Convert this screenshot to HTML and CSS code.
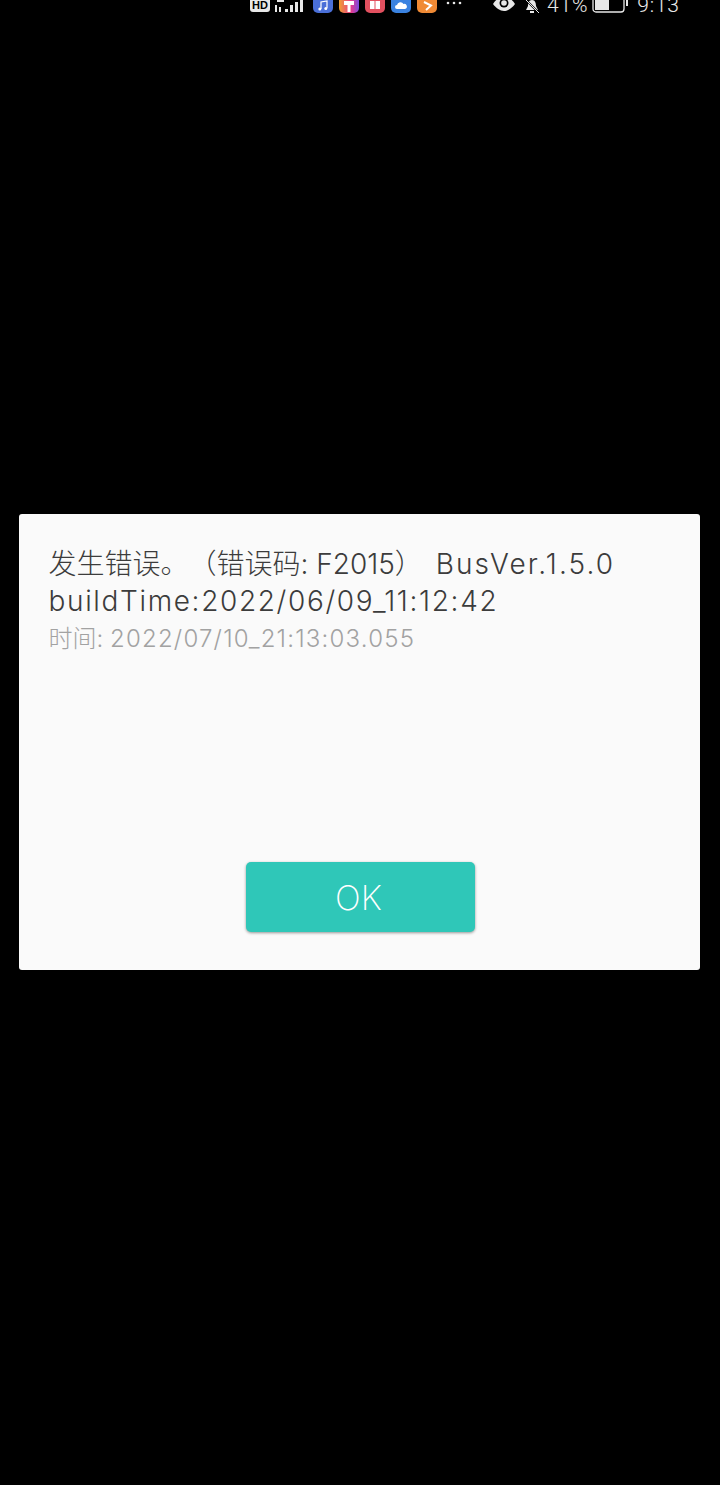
FILE: index.html
```
<!DOCTYPE html>
<html lang="zh">
<head>
<meta charset="utf-8">
<title>Error</title>
<link rel="stylesheet" href="styles.css">
</head>
<body>
<div class="status">
  <span class="hd">HD</span>
  <svg class="signal" width="32" height="13" viewBox="0 0 32 13"><g fill="#e8e8e8"><rect x="3" y="0" width="7" height="2"/><rect x="1" y="5" width="2" height="7"/><rect x="5" y="7" width="2" height="5"/><rect x="11" y="9" width="3" height="3"/><rect x="16" y="5" width="3" height="7"/><rect x="21" y="2" width="3" height="10"/><rect x="26" y="0" width="3" height="12"/></g></svg>
  <span class="app app-music"><svg width="14" height="13" viewBox="0 0 14 13"><path d="M5 9V2l6-1v7" fill="none" stroke="#fff" stroke-width="1.200"/><circle cx="3.800" cy="9" r="1.500" fill="#fff"/><circle cx="9.800" cy="8.500" r="1.500" fill="#fff"/></svg></span>
  <span class="app app-brush"><svg width="14" height="13" viewBox="0 0 14 13"><path d="M2 1h10v4H8.500v7h-3V5H2z" fill="#fff"/></svg></span>
  <span class="app app-book"><svg width="14" height="13" viewBox="0 0 14 13"><path d="M2 1h4.500v8H2zM7.500 1H12v8H7.500z" fill="#fff"/></svg></span>
  <span class="app app-cloud"><svg width="14" height="13" viewBox="0 0 14 13"><path d="M3 9a2 2 0 0 1 0-4 3.500 3.500 0 0 1 6.500-1A2.500 2.500 0 0 1 11 9z" fill="#fff"/></svg></span>
  <span class="app app-play"><svg width="14" height="13" viewBox="0 0 14 13"><path d="M4 2l7 3.500L6 10" fill="none" stroke="#fff" stroke-width="2"/></svg></span>
  <svg class="dots" width="16" height="6" viewBox="0 0 16 6"><circle cx="2" cy="3" r="1.300" fill="#e8e8e8"/><circle cx="8" cy="3" r="1.300" fill="#e8e8e8"/><circle cx="14" cy="3" r="1.300" fill="#e8e8e8"/></svg>
  <svg class="eye" width="24" height="13" viewBox="0 0 24 13"><path d="M1 4C4-1 8-3 12-3s8 2 11 7c-3 4-7 7-11 7S4 8 1 4z" fill="#e8e8e8"/><circle cx="12" cy="3" r="4.500" fill="#000"/><circle cx="12" cy="3" r="2.800" fill="#e8e8e8"/></svg>
  <svg class="bell" width="18" height="14" viewBox="0 0 18 14"><path d="M9 0c3 0 4 3 4 6l2 4H3l2-4c0-3 1-6 4-6z" fill="#e8e8e8"/><rect x="7" y="11" width="4" height="2" fill="#e8e8e8"/><path d="M3 0l13 13" stroke="#000" stroke-width="1.800"/><path d="M3 0l13 13" stroke="#e8e8e8" stroke-width="1"/></svg>
  <span class="pct">41%</span>
  <svg class="battery" width="36" height="13" viewBox="0 0 36 13"><rect x="1" y="-4" width="31" height="16" rx="3" fill="none" stroke="#e8e8e8" stroke-width="1.300"/><rect x="3" y="-2" width="14" height="12" fill="#e8e8e8"/><rect x="34" y="0" width="2" height="6" fill="#e8e8e8"/></svg>
  <span class="clock">9:13</span>
</div>
<main class="stage">
  <section class="dialog">
    <div class="msg">
      <p class="error">发生错误。（错误码: F2015） <span class="ver">BusVer.1.5.0</span><br><span class="build">buildTime:2022/06/09_11:12:42</span></p>
      <p class="time">时间: <span class="stamp">2022/07/10_21:13:03.055</span></p>
    </div>
    <button class="ok" type="button"><span class="ok-label">OK</span></button>
  </section>
</main>
</body>
</html>
```
FILE: styles.css
```
html, body { margin: 0; padding: 0; background: #000; }
body { width: 720px; height: 1485px; overflow: hidden; font-family: "Noto Sans CJK SC", "Noto Sans", sans-serif; }
.status { height: 14px; display: flex; align-items: flex-start; overflow: hidden; padding-left: 250px; color: #e8e8e8; }
.hd { width: 20px; height: 12px; border-radius: 0 0 3px 3px; background: #e8e8e8; color: #000; font: 700 11px/10px "Liberation Sans", sans-serif; text-align: center; margin-right: 4px; }
.signal { margin-right: 7px; }
.app { width: 20px; height: 13px; margin-right: 6px; border-radius: 0 0 5px 5px; display: flex; justify-content: center; }
.app-music { background: #4a6fd8; }
.app-brush { background: linear-gradient(90deg, #f0a030, #e83a8a 60%, #7a4ae0); }
.app-book { background: #e2505f; }
.app-cloud { background: #3a82e0; }
.app-play { background: #f08a35; margin-right: 9px; }
.dots { margin-right: 30px; }
.eye { margin-right: 7px; }
.bell { margin-right: 6px; }
.pct { font: 300 21px/11px Roboto, sans-serif; margin-right: 4px; letter-spacing: 0.8px; }
.battery { margin-right: 9px; }
.clock { font: 300 21px/11px Roboto, sans-serif; letter-spacing: 0.8px; }
.stage { height: 1471px; display: flex; justify-content: center; align-items: flex-start; padding: 500px 1px 0 0; box-sizing: border-box; }
.dialog { width: 681px; height: 456px; box-sizing: border-box; background: #fafafa; border-radius: 3px; padding: 32px 30px 38px; display: flex; flex-direction: column; align-items: center; }
.msg { flex: 1; width: 100%; margin-left: -1px; }
.error { margin: 0; font-size: 28px; line-height: 37px; color: #3c3c3c; font-weight: 300; font-family: Inter, "Noto Sans CJK SC", sans-serif; white-space: nowrap; text-spacing-trim: space-all; }
.ver { letter-spacing: 2.100px; margin-left: 5px; }
.build { letter-spacing: 1.650px; }
.time { margin: 1px 0 0; font-size: 24px; line-height: 36px; color: #a2a2a2; font-family: Inter, "Noto Sans CJK SC", sans-serif; font-weight: 300; white-space: nowrap; text-spacing-trim: space-all; }
.stamp { letter-spacing: 1.200px; }
.ok { width: 229px; height: 70px; margin-left: 2px; border: 0; border-radius: 5px; background: #2fc7b8; color: #fff; font: 200 34px/1 Inter, sans-serif; box-shadow: 0 1px 3px rgba(0,0,0,.4); padding: 2px 4px 0 0; }
.ok-label { display: block; }
```
